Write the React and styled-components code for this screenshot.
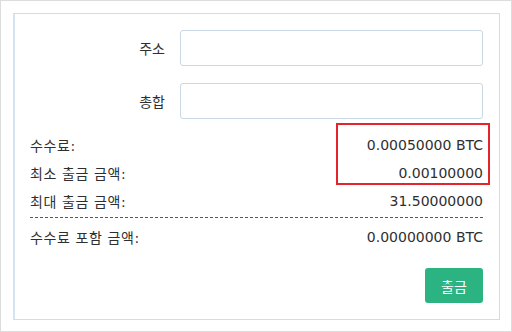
import React from "react";
import styled, { createGlobalStyle } from "styled-components";

const Global = createGlobalStyle`
  html, body { margin: 0; padding: 0; background: #fff; }
  body {
    font-family: "DejaVu Sans", "Noto Sans CJK KR", sans-serif;
    font-size: 13px;
    color: #2f2f2f;
  }
  * { box-sizing: border-box; }
`;

const Frame = styled.div`
  width: 512px;
  height: 332px;
  border: 1px solid #dcdcdc;
  padding: 12px 11px 12px 12px;
`;

const Card = styled.div`
  position: relative;
  height: 307px;
  border: 1px solid #cfdcea;
  border-left: 2px solid #d6e3f0;
  padding: 16px 16px 0 15px;
  display: flex;
  flex-direction: column;
`;

const FieldRow = styled.div`
  display: flex;
  align-items: center;
  gap: 15px;
  margin-bottom: ${({ last }) => (last ? "12px" : "17px")};
`;

const Label = styled.label`
  width: 135px;
  text-align: right;
  font-size: 14px;
`;

const Input = styled.input`
  flex: 1;
  height: 36px;
  border: 1px solid #c9d8e4;
  border-radius: 3px;
  outline: none;
`;

const InfoRow = styled.div`
  display: flex;
  justify-content: space-between;
  align-items: center;
  height: 28px;
  font-size: 14px;
`;

const Key = styled.span`
  letter-spacing: 0.6px;
`;

const Divider = styled.div`
  border-top: 1px dashed #4f5b62;
  margin: 2px 0 5px;
`;

const Footer = styled.div`
  display: flex;
  justify-content: flex-end;
  margin-top: 17px;
`;

const Button = styled.button`
  width: 58px;
  height: 35px;
  border: none;
  border-radius: 3px;
  background: #2bb482;
  color: #fff;
  font-family: "Noto Sans CJK KR", sans-serif;
  font-size: 14px;
`;

const Highlight = styled.div`
  position: absolute;
  left: 321px;
  top: 109px;
  width: 154px;
  height: 62px;
  border: 2px solid #e4242b;
  pointer-events: none;
`;

const info = [
  ["수수료:", "0.00050000 BTC"],
  ["최소 출금 금액:", "0.00100000"],
  ["최대 출금 금액:", "31.50000000"],
];

export default function App() {
  return (
    <>
      <Global />
      <Frame>
        <Card>
          <FieldRow>
            <Label>주소</Label>
            <Input />
          </FieldRow>
          <FieldRow last>
            <Label>총합</Label>
            <Input />
          </FieldRow>
          {info.map(([k, v]) => (
            <InfoRow key={k}>
              <Key>{k}</Key>
              <span>{v}</span>
            </InfoRow>
          ))}
          <Divider />
          <InfoRow>
            <Key>수수료 포함 금액:</Key>
            <span>0.00000000 BTC</span>
          </InfoRow>
          <Footer>
            <Button>출금</Button>
          </Footer>
          <Highlight />
        </Card>
      </Frame>
    </>
  );
}
